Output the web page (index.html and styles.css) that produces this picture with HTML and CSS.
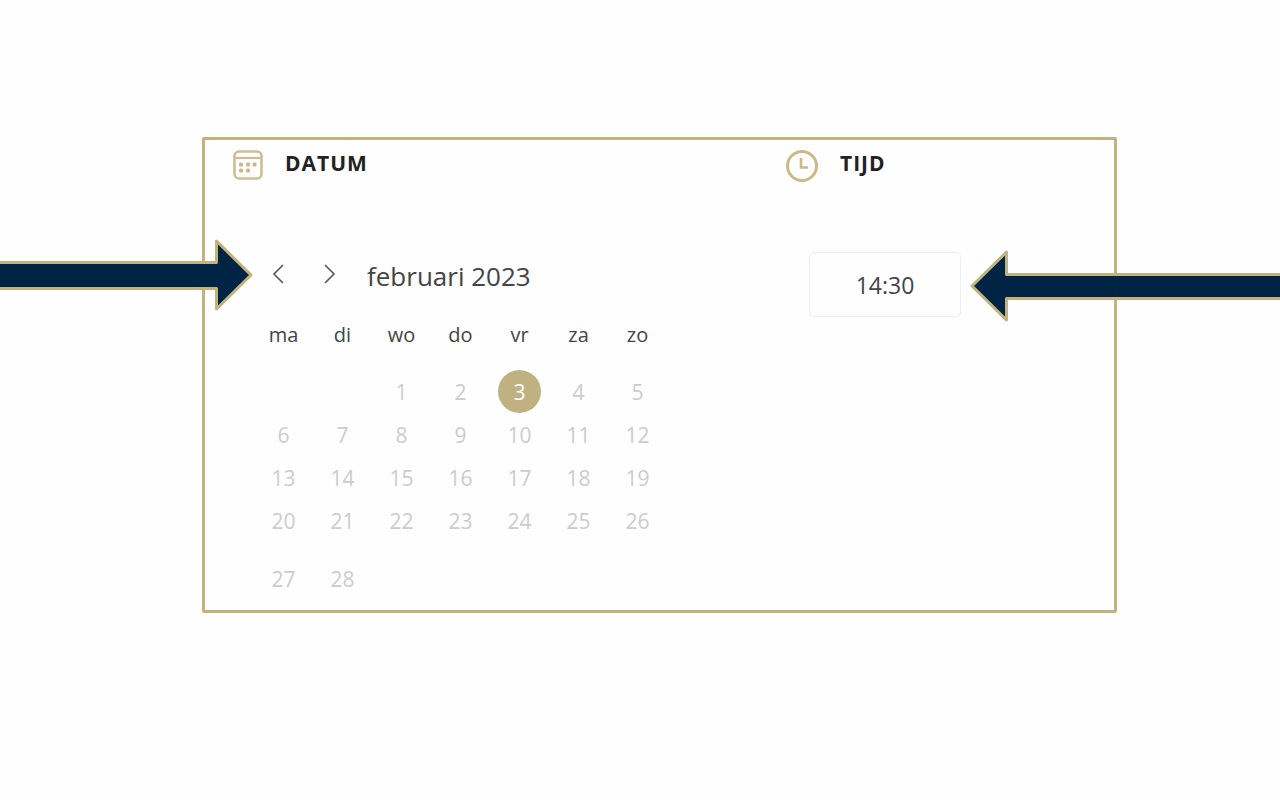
FILE: index.html
```html
<!DOCTYPE html>
<html lang="nl">
<head>
<meta charset="utf-8">
<meta name="viewport" content="width=device-width, initial-scale=1">
<title>Datum en tijd</title>
<link rel="stylesheet" href="styles.css">
</head>
<body>
<main class="planner">
  <section class="date">
    <header class="heading">
      <svg class="icon" width="32" height="32" viewBox="0 0 32 32" aria-hidden="true">
        <rect x="2.5" y="2.5" width="27" height="27" rx="4.5" fill="none" stroke="#cdbf93" stroke-width="2.6"/>
        <path d="M3 9h26" stroke="#cdbf93" stroke-width="2.2"/>
        <g fill="#c9b78a"><rect x="7" y="13.500" width="4" height="4" rx="1.500"/><rect x="14" y="13.500" width="4" height="4" rx="1.500"/><rect x="20.500" y="13.500" width="4" height="4" rx="1.500"/><rect x="7" y="19.500" width="4" height="4" rx="1.500"/><rect x="14" y="19.500" width="4" height="4" rx="1.500"/></g>
      </svg>
      <h2 class="title">DATUM</h2>
    </header>
    <div class="calendar">
      <div class="month-bar">
        <button class="nav" type="button" aria-label="Vorige maand"><svg width="14" height="22" viewBox="0 0 14 22"><path d="M12 1L3 10l9 9"/></svg></button>
        <button class="nav" type="button" aria-label="Volgende maand"><svg width="14" height="22" viewBox="0 0 14 22"><path d="M2 1l9 9-9 9"/></svg></button>
        <span class="month">februari 2023</span>
      </div>
      <table class="days">
        <thead><tr><th>ma</th><th>di</th><th>wo</th><th>do</th><th>vr</th><th>za</th><th>zo</th></tr></thead>
        <tbody>
          <tr><td></td><td></td><td><button class="day">1</button></td><td><button class="day">2</button></td><td><button class="day selected" aria-pressed="true">3</button></td><td><button class="day">4</button></td><td><button class="day">5</button></td></tr>
          <tr><td><button class="day">6</button></td><td><button class="day">7</button></td><td><button class="day">8</button></td><td><button class="day">9</button></td><td><button class="day">10</button></td><td><button class="day">11</button></td><td><button class="day">12</button></td></tr>
          <tr><td><button class="day">13</button></td><td><button class="day">14</button></td><td><button class="day">15</button></td><td><button class="day">16</button></td><td><button class="day">17</button></td><td><button class="day">18</button></td><td><button class="day">19</button></td></tr>
          <tr><td><button class="day">20</button></td><td><button class="day">21</button></td><td><button class="day">22</button></td><td><button class="day">23</button></td><td><button class="day">24</button></td><td><button class="day">25</button></td><td><button class="day">26</button></td></tr>
          <tr class="last"><td><button class="day">27</button></td><td><button class="day">28</button></td><td></td><td></td><td></td><td></td><td></td></tr>
        </tbody>
      </table>
    </div>
  </section>
  <section class="time">
    <header class="heading">
      <svg class="icon" width="34" height="34" viewBox="0 0 34 34" aria-hidden="true">
        <g fill="none" stroke="#cbba88" stroke-width="3"><circle cx="17" cy="18" r="14.500"/><path d="M16 10v9.500h7" stroke-width="2.600"/></g>
      </svg>
      <h2 class="title">TIJD</h2>
    </header>
    <button class="slot" type="button">14:30</button>
  </section>
  <svg class="arrow arrow-left" width="270" height="76" viewBox="0 0 270 76" aria-hidden="true"><path d="M-4 25.500H233.500V4L268 38 233.500 72V51.500H-4Z"/></svg>
  <svg class="arrow arrow-right" width="320" height="76" viewBox="0 0 320 76" aria-hidden="true"><path d="M324 26.500H36.500V4L2 38 36.500 72V50.500H324Z"/></svg>
</main>
</body>
</html>
```
FILE: styles.css
```css
* { box-sizing: border-box; }
body {
  margin: 0;
  padding: 137px 163px 40px 202px;
  overflow-x: hidden;
  background: #fefefe;
  color: #444;
  font-family: "Open Sans", "Noto Sans", sans-serif;
}
button {
  padding: 0;
  border: 0;
  background: none;
  color: inherit;
  font: inherit;
}
.planner {
  position: relative;
  display: grid;
  grid-template-columns: 553fr 356fr;
  padding-bottom: 10px;
  border: 3px solid #c3b17e;
  border-radius: 2px;
}
.heading {
  display: flex;
  align-items: center;
  gap: 21px;
  height: 50px;
  padding-left: 27px;
}
.title {
  margin: 0;
  padding-bottom: 4px;
  color: #222;
  font-size: 21px;
  line-height: 28px;
  font-weight: 700;
  letter-spacing: 1px;
}
.calendar { padding: 63px 0 0 49px; }
.month-bar {
  display: flex;
  align-items: center;
  gap: 38px;
  height: 44px;
  padding-left: 17px;
}
.nav { height: 22px; line-height: 0; }
.nav path { fill: none; stroke: #555; stroke-width: 1.6; }
.month {
  margin-left: -8px;
  padding-top: 2px;
  font-size: 26px;
  line-height: 40px;
}
.days {
  width: 413px;
  margin-top: 16px;
  border-collapse: collapse;
  table-layout: fixed;
  font-size: 21px;
  line-height: 28px;
}
.days th {
  height: 57px;
  padding: 0 0 14px;
  font-size: 20px;
  font-weight: 400;
}
.days td {
  height: 43px;
  padding: 0;
  text-align: center;
}
.days .last td { height: 58px; padding-top: 15px; }
.day {
  display: block;
  width: 43px;
  height: 43px;
  margin: 0 auto;
  border-radius: 50%;
  color: #ccc;
}
.selected { background: #c0b182; color: #fff; }
.slot {
  width: 152px;
  height: 65px;
  margin: 62px 0 0 51px;
  border: 1px solid #eee;
  border-radius: 5px;
  font-size: 23px;
}
.arrow { position: absolute; }
.arrow path { fill: #002443; stroke: #c3b17e; stroke-width: 3; stroke-linejoin: round; }
.arrow-left { top: 97px; right: calc(100% - 48px); }
.arrow-right { top: 108px; left: calc(100% - 144px); }
```
